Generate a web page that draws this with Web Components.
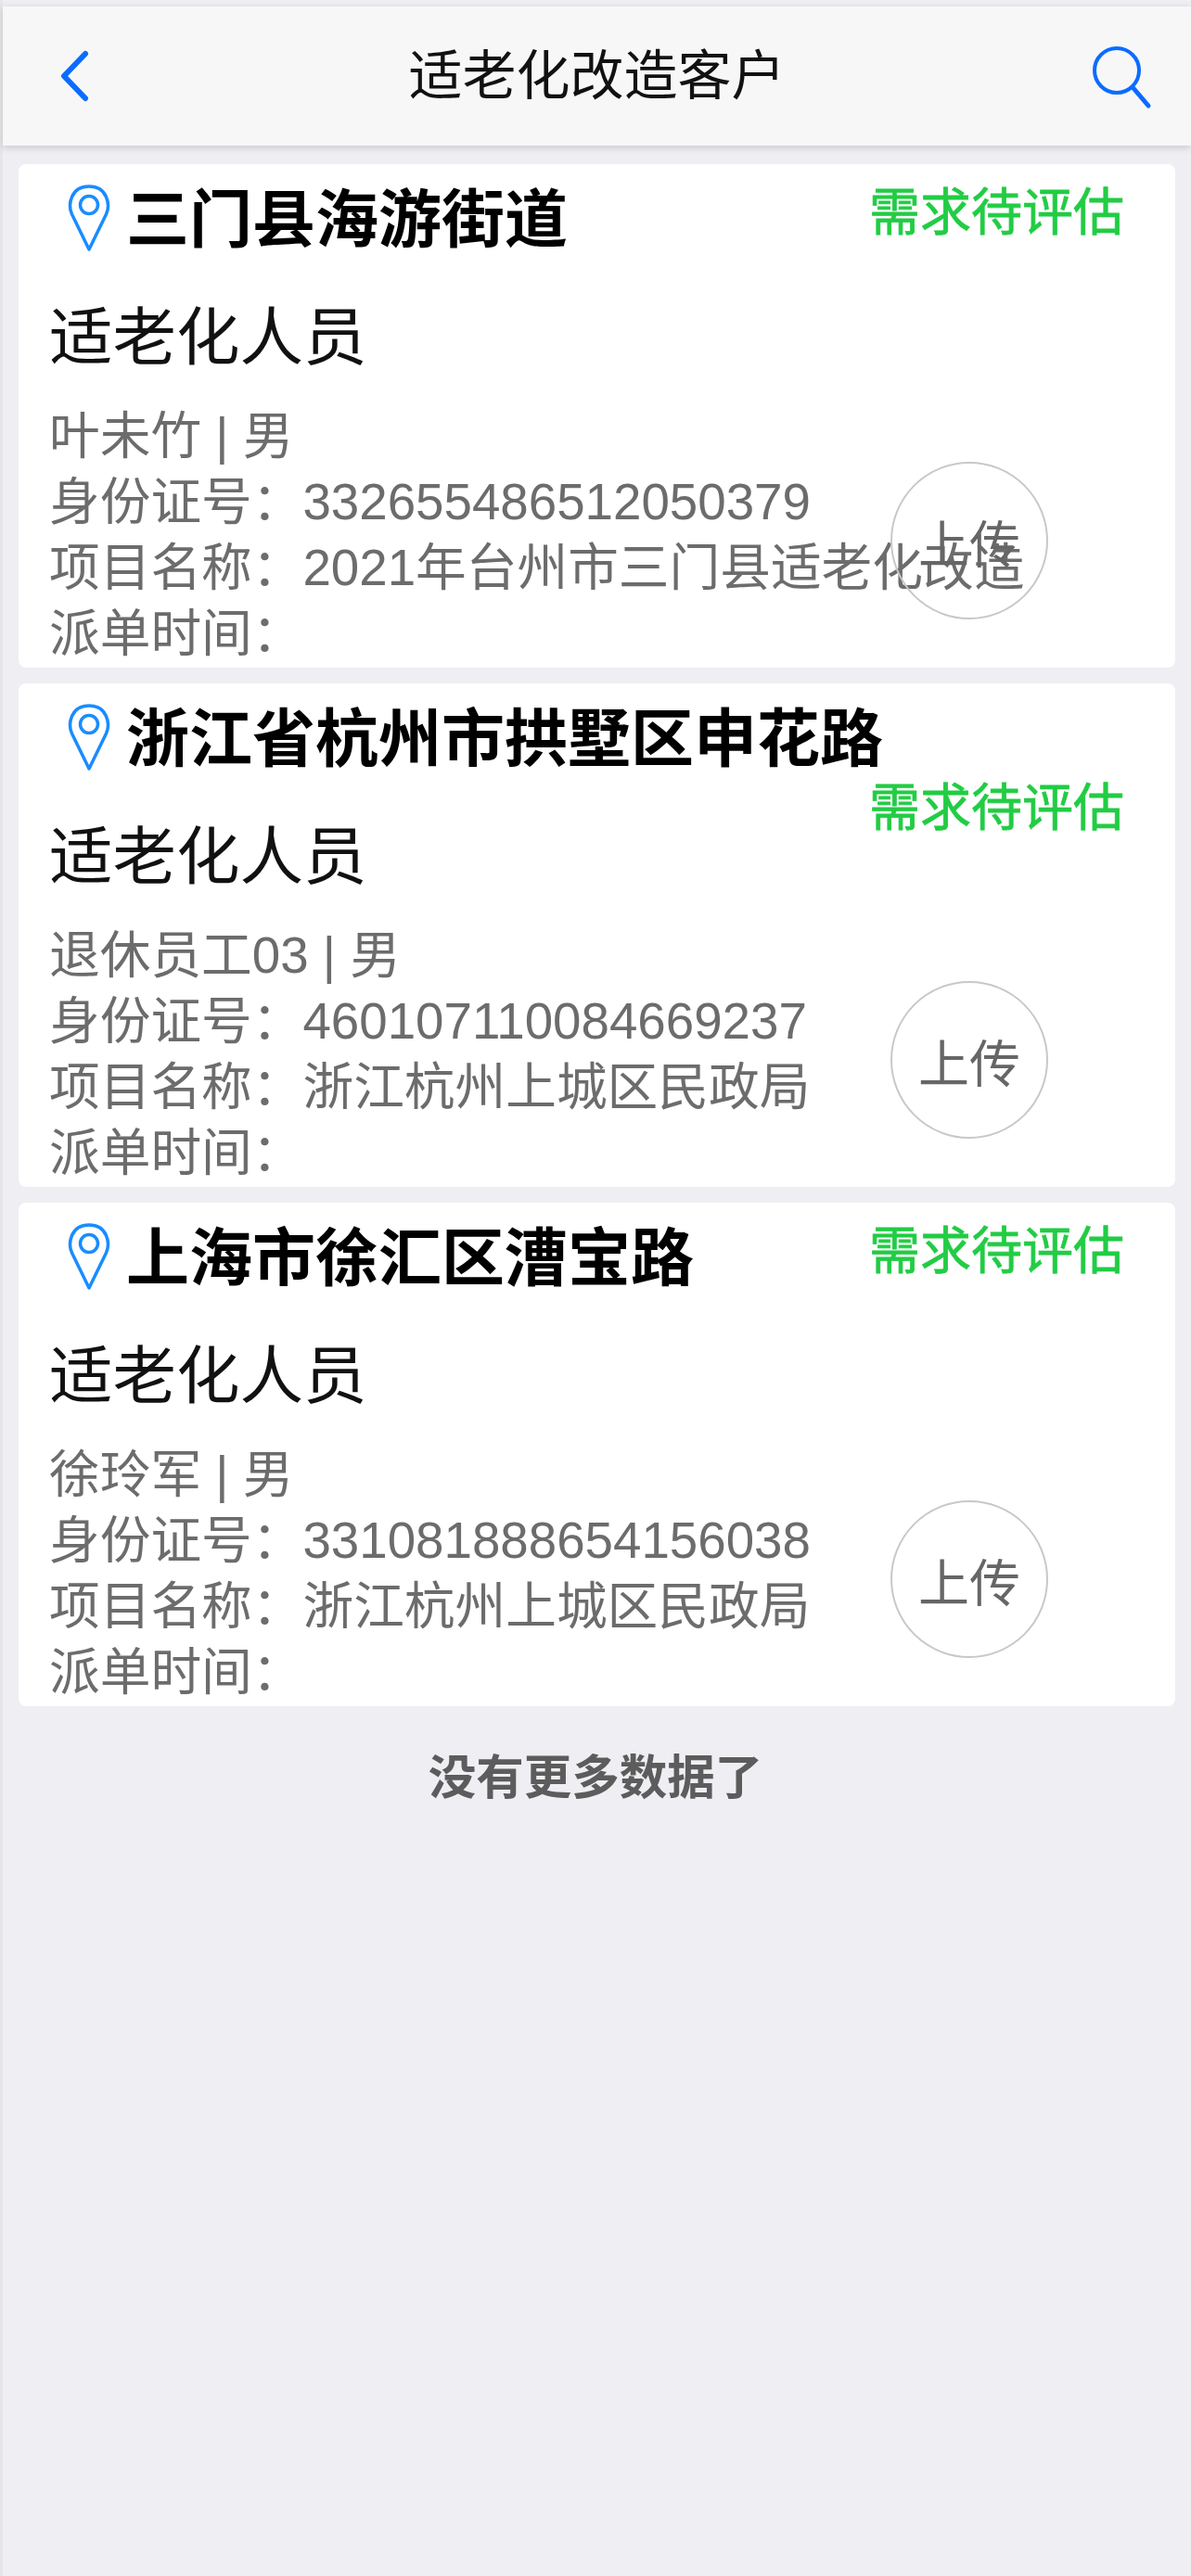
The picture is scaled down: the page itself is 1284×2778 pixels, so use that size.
<!DOCTYPE html>
<html lang="zh-CN">
<head>
<meta charset="utf-8">
<title>适老化改造客户</title>
<style>
  html, body { margin: 0; height: 100%; }
  body {
    background-color: #eeeef3;
    font-family: "Liberation Sans", "Noto Sans CJK SC", sans-serif;
  }
</style>
</head>
<body>
<app-page>
  <nav-bar>适老化改造客户</nav-bar>
  <customer-card>
    <span slot="address">三门县海游街道</span>
    <span slot="status">需求待评估</span>
    <span slot="role">适老化人员</span>
    <span slot="person">叶未竹 | 男</span>
    <span slot="idcard">332655486512050379</span>
    <span slot="project">2021年台州市三门县适老化改造</span>
  </customer-card>
  <customer-card>
    <span slot="address">浙江省杭州市拱墅区申花路</span>
    <span slot="status">需求待评估</span>
    <span slot="role">适老化人员</span>
    <span slot="person">退休员工03 | 男</span>
    <span slot="idcard">460107110084669237</span>
    <span slot="project">浙江杭州上城区民政局</span>
  </customer-card>
  <customer-card>
    <span slot="address">上海市徐汇区漕宝路</span>
    <span slot="status">需求待评估</span>
    <span slot="role">适老化人员</span>
    <span slot="person">徐玲军 | 男</span>
    <span slot="idcard">331081888654156038</span>
    <span slot="project">浙江杭州上城区民政局</span>
  </customer-card>
  <list-end>没有更多数据了</list-end>
</app-page>

<script>
class AppPage extends HTMLElement {
  constructor() {
    super();
    this.attachShadow({ mode: "open" });
    this.shadowRoot.innerHTML = `
      <style>
        :host {
          display: flex;
          flex-direction: column;
          min-height: 2778px;
          box-sizing: border-box;
          padding-top: 7px;
          background: linear-gradient(to right, #e6e6ea 3px, #eeeef3 3px);
          filter: blur(0.5px);
        }
      </style>
      <slot></slot>
    `;
  }
}

class NavBar extends HTMLElement {
  constructor() {
    super();
    this.attachShadow({ mode: "open" });
    this.shadowRoot.innerHTML = `
      <style>
        :host {
          display: grid;
          grid-template-columns: 150px 1fr 150px;
          align-items: center;
          height: 150px;
          margin-left: 3px;
          margin-bottom: 20px;
          background-color: #f7f7f7;
          box-shadow: 0 2px 8px rgba(0, 0, 0, 0.16);
          color: #111;
          font-size: 58px;
          position: relative;
        }
        .title { text-align: center; line-height: 150px; }
        svg { display: block; fill: none; stroke: #0a6cff; stroke-linecap: round; stroke-linejoin: round; }
        .back { margin-left: 58px; }
        .search { margin: 6px 0 0 41px; }
      </style>
      <svg class="back" width="36" height="56" viewBox="0 0 36 56">
        <path d="M31 4 L8 28 L31 52" stroke-width="6"/>
      </svg>
      <div class="title"><slot></slot></div>
      <svg class="search" width="70" height="72" viewBox="0 0 70 72">
        <circle cx="29" cy="27" r="24" stroke-width="4"/>
        <path d="M46 45 L63 65" stroke-width="5"/>
      </svg>
    `;
  }
}

class CustomerCard extends HTMLElement {
  constructor() {
    super();
    this.attachShadow({ mode: "open" });
    this.shadowRoot.innerHTML = `
      <style>
        :host {
          display: block;
          position: relative;
          box-sizing: border-box;
          height: 543px;
          margin: 0 17px 17px 20px;
          padding: 17px 0 0;
          background-color: #fff;
          border-radius: 8px;
          font-size: 54.7px;
        }
        .address {
          display: inline-flex;
          align-items: center;
          gap: 17px;
          height: 82px;
          margin-left: 53px;
          vertical-align: top;
          font-size: 68px;
          line-height: 78px;
          font-weight: 700;
          color: #000;
          white-space: nowrap;
        }
        .address svg { flex: none; fill: none; stroke: #1a8cff; }
        .name { padding-top: 4px; }
        .status {
          float: right;
          margin-right: 55px;
          font-size: 55px;
          line-height: 70px;
          color: #22cc44;
          -webkit-text-stroke: 0.8px #22cc44;
        }
        .role {
          margin: 44px 0 0 33px;
          font-size: 68.5px;
          line-height: 90px;
          color: #111;
        }
        .info {
          margin: 24.5px 0 0 33px;
          line-height: 71px;
          color: #6c6c6c;
          white-space: nowrap;
        }
        .upload {
          position: absolute;
          top: 321px;
          right: 137px;
          box-sizing: border-box;
          width: 170px;
          height: 170px;
          display: flex;
          align-items: center;
          justify-content: center;
          border: 2px solid #c8c8c8;
          border-radius: 50%;
          color: #666;
          font-size: 55px;
        }
      </style>
      <div class="head-wrap">
        <div class="address">
          <svg width="46" height="74" viewBox="0 0 46 74">
            <path d="M23 71 L4.5 33 C0 23 3 3 23 3 C43 3 46 23 41.5 33 Z" stroke-width="3.5" stroke-linejoin="round"/>
            <circle cx="23" cy="23" r="9.5" stroke-width="3.5"/>
          </svg>
          <span class="name"><slot name="address"></slot></span>
        </div>
        <span class="status"><slot name="status"></slot></span>
      </div>
      <div class="role"><slot name="role"></slot></div>
      <div class="info">
        <div><slot name="person"></slot></div>
        <div>身份证号：<slot name="idcard"></slot></div>
        <div>项目名称：<slot name="project"></slot></div>
        <div>派单时间：</div>
      </div>
      <div class="upload">上传</div>
    `;
  }
}

class ListEnd extends HTMLElement {
  constructor() {
    super();
    this.attachShadow({ mode: "open" });
    this.shadowRoot.innerHTML = `
      <style>
        :host {
          display: block;
          margin-top: 25px;
          text-align: center;
          font-size: 51.5px;
          font-weight: 700;
          line-height: 70px;
          color: #5c5c5c;
        }
      </style>
      <slot></slot>
    `;
  }
}

customElements.define("app-page", AppPage);
customElements.define("nav-bar", NavBar);
customElements.define("customer-card", CustomerCard);
customElements.define("list-end", ListEnd);
</script>
</body>
</html>
